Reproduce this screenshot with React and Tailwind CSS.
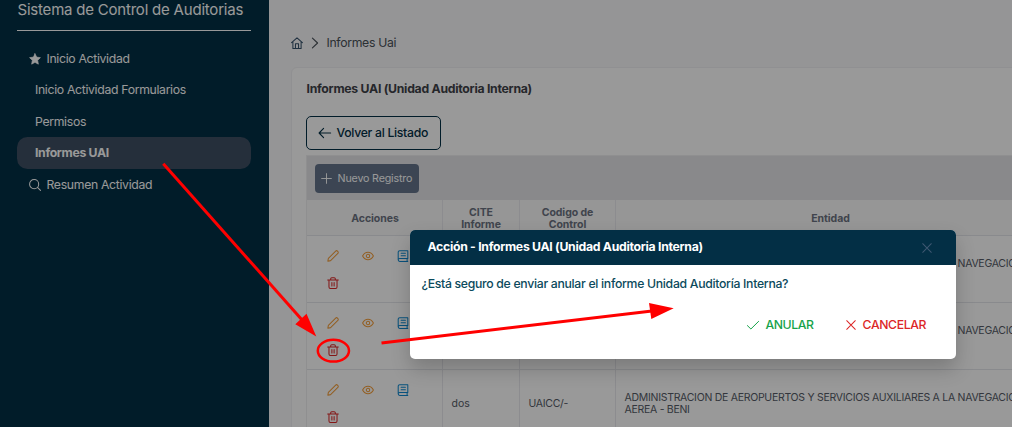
import React from "react";

function Icon({ className, width = 1.1, children }) {
  return (
    <svg
      viewBox="0 0 14 14"
      className={"shrink-0 " + className}
      fill="none"
      stroke="currentColor"
      strokeWidth={width}
      strokeLinecap="round"
      strokeLinejoin="round"
    >
      {children}
    </svg>
  );
}

const Star = () => (
  <Icon className="size-3" width={0.8}>
    <path fill="currentColor" d="M7 .8l1.9 4 4.4.6-3.2 3.1.8 4.5L7 10.9 3.1 13l.8-4.5L.7 5.4l4.4-.6z" />
  </Icon>
);
const Search = () => (
  <Icon className="size-3" width={1.2}>
    <circle cx="6" cy="6" r="5.3" />
    <path d="M9.9 9.9l3.5 3.5" />
  </Icon>
);
const Home = () => (
  <Icon className="size-3" width={1.2}>
    <path d="M.7 6.6L7 1l6.3 5.6M2.2 5.6v7.7h9.6V5.6M5.2 13V7.8h3.6V13" />
  </Icon>
);
const Chevron = () => (
  <Icon className="size-3" width={1.3}>
    <path d="M4 1.2L10 7l-6 5.8" />
  </Icon>
);
const ArrowLeft = () => (
  <Icon className="size-3.5" width={1.1}>
    <path d="M12.6 7H1.2M5.6 2.4L1.1 7l4.5 4.6" />
  </Icon>
);
const Plus = () => (
  <Icon className="size-[11px]" width={1.2}>
    <path d="M7 .8v12.4M.8 7h12.4" />
  </Icon>
);
const Times = ({ className }) => (
  <Icon className={className} width={1.2}>
    <path d="M2 2l10 10M12 2L2 12" />
  </Icon>
);
const Check = () => (
  <Icon className="size-3.5" width={1}>
    <path d="M1.4 7.6l3.5 3.4 7.7-7.6" />
  </Icon>
);
const Pencil = () => (
  <Icon className="size-3 text-[#f59e3a]" width={1.2}>
    <path d="M1 13l.6-3.2 8.5-8.5c.6-.6 1.5-.6 2.1 0l.5.5c.6.6.6 1.5 0 2.1l-8.5 8.5z" />
  </Icon>
);
const Eye = () => (
  <Icon className="size-3 text-[#f59e3a]" width={1.2}>
    <path d="M.7 7C2.2 4.1 4.4 2.6 7 2.6S11.8 4.1 13.3 7C11.8 9.9 9.6 11.4 7 11.4S2.2 9.9.7 7z" />
    <circle cx="7" cy="7" r="2" />
  </Icon>
);
const Book = () => (
  <Icon className="size-3 text-[#0e88d0]" width={1.2}>
    <path d="M12.6 10V.8H3.200C2.200.8 1.400 1.600 1.400 2.600v8.800c0 1 .8 1.900 1.800 1.900h9.400M12.600 10H3.200c-1 0-1.800.6-1.800 1.400M11.800 10v3M4.800 3.900h5M4.800 6.700h5" />
  </Icon>
);
const Trash = () => (
  <Icon className="size-3 text-[#dc2626]" width={1.2}>
    <path d="M.8 3.500h12.400M2.300 3.500v8.200c0 .9.700 1.600 1.600 1.600h6.200c.9 0 1.600-.7 1.600-1.600V3.500M4.300 3.300V2c0-.7.600-1.200 1.300-1.200h2.800c.7 0 1.300.5 1.300 1.200v1.300M5.700 6.400v4M8.300 6.400v4" />
  </Icon>
);

function Sidebar() {
  return (
    <aside className="w-[269px] shrink-0 bg-[#032f45] pr-[18px] pl-[17px] text-white">
      <div className="flex h-[31px] items-start border-b border-white pl-[0.5px] text-[15px] leading-[20px] tracking-[-0.21px] whitespace-nowrap">
        Sistema de Control de Auditorias
      </div>
      <nav className="pt-[12px] text-[12.25px] tracking-[-0.33px]">
        <div className="flex h-[31.5px] items-center gap-[5.5px] pl-3">
          <Star />
          <span className="pt-px">Inicio Actividad</span>
        </div>
        <div className="flex h-[31.5px] items-center pl-[18px]">Inicio Actividad Formularios</div>
        <div className="flex h-[31.5px] items-center pt-px pl-[18px]">Permisos</div>
        <div className="-mt-[0.5px] flex h-[32px] items-center rounded-[10.5px] bg-[#3e4f63] pl-[18px] font-bold">
          Informes UAI
        </div>
        <div className="flex h-[31.5px] items-center gap-[5.5px] pl-3">
          <Search />
          <span className="pt-px">Resumen Actividad</span>
        </div>
      </nav>
    </aside>
  );
}

const rows = [
  { cite: "dos", code: "UAICC/-" },
  { cite: "dos", code: "UAICC/-" },
  { cite: "dos", code: "UAICC/-" },
];

function Row({ cite, code }) {
  return (
    <div className="grid h-[67px] grid-cols-[136px_77px_96px_429px] border-b border-[#e5e7eb] text-[10.5px] leading-3 tracking-[-0.28px] text-[#555b66]">
      <div className="grid grid-cols-[35.2px_35.2px_35.2px] content-start gap-y-[15.2px] border-r border-[#e9eaee] pt-[13.5px] pl-[20px]">
        <Pencil />
        <Eye />
        <Book />
        <Trash />
      </div>
      <div className="flex items-center border-r border-[#e9eaee] pt-px pl-[8.5px] tracking-normal">{cite}</div>
      <div className="flex items-center border-r border-[#e9eaee] pt-px pl-[8.5px]">{code}</div>
      <div className="flex items-center pt-px pr-2 pl-[8.5px]">
        <span className="whitespace-nowrap">
          ADMINISTRACION DE AEROPUERTOS Y SERVICIOS AUXILIARES A LA NAVEGACION
          <br />
          AEREA - BENI
        </span>
      </div>
    </div>
  );
}

function Content() {
  return (
    <main className="min-w-0 flex-1 overflow-hidden bg-[#f8f8fa] pt-[35px] pl-[22px]">
      <div className="flex h-4 items-center gap-[5.5px] text-[12.25px] tracking-[-0.33px] text-[#495057]">
        <span className="flex text-[#34506a]">
          <Home />
        </span>
        <Chevron />
        <span className="pl-[0.5px]">Informes Uai</span>
      </div>
      <section className="mt-4 h-[400px] w-[790px] rounded-md border border-[#f0f0f3] bg-white pt-[13px] pl-3.5">
        <h1 className="h-4 pl-[0.5px] text-[12.25px] leading-4 font-bold tracking-[-0.27px] text-[#3f4249]">
          Informes UAI (Unidad Auditoria Interna)
        </h1>
        <div className="mt-[19px] flex h-[34px] w-[135px] items-center gap-[4.5px] rounded-[5px] border border-[#032f45] pl-[11px] text-[12.25px] font-medium tracking-[-0.3px] whitespace-nowrap text-[#032f45]">
          <ArrowLeft />
          Volver al Listado
        </div>
        <div className="mt-[5px] w-[739px] border border-[#eeeef1]">
          <div className="flex h-11 items-center bg-[#e4e4e8] pl-2">
            <div className="flex h-[29px] w-[104px] items-center gap-[5.5px] rounded-[4px] bg-[#64748b] pl-1.5 text-[10.7px] tracking-[-0.17px] whitespace-nowrap text-white">
              <Plus />
              <span className="pt-0.5">Nuevo Registro</span>
            </div>
          </div>
          <div className="grid h-9 grid-cols-[136px_77px_96px_429px] border-b border-[#e5e7eb] bg-[#fafafa] text-center text-[10.5px] leading-3 font-bold tracking-[-0.05px] text-[#6b7280]">
            <div className="flex items-center justify-center border-r border-[#e9eaee] pt-0.5 pl-px">Acciones</div>
            <div className="flex items-center justify-center border-r border-[#e9eaee] pt-[3px]">
              CITE
              <br />
              Informe
            </div>
            <div className="flex items-center justify-center border-r border-[#e9eaee] px-4 pt-[3px]">
              Codigo de Control
            </div>
            <div className="flex items-center justify-center pt-[3px]">Entidad</div>
          </div>
          {rows.map((row, i) => (
            <Row key={i} {...row} />
          ))}
        </div>
      </section>
    </main>
  );
}

function Dialog() {
  return (
    <div className="absolute top-[230px] left-[410px] flex h-[129px] w-[546px] flex-col overflow-hidden rounded-[5px] bg-white shadow-[0_10px_20px_rgba(0,0,0,0.2)]">
      <div className="flex h-[35px] items-center justify-between bg-[#032f45] pr-[23px] pl-[17.5px] text-[12.25px] font-bold tracking-[-0.29px] text-white">
        Acción - Informes UAI (Unidad Auditoria Interna)
        <Times className="size-3 text-[#3f5872]" />
      </div>
      <p className="mt-[11px] pl-[11.5px] text-[12.25px] leading-4 font-medium tracking-[-0.305px] text-[#0b4a5c]">
        ¿Está seguro de enviar anular el informe Unidad Auditoría Interna?
      </p>
      <div className="mt-[25px] flex h-4 items-center justify-end pr-[30px] text-[12.25px] font-medium tracking-[-0.4px]">
        <span className="flex items-center gap-[5px] text-[#16a34a]">
          <Check />
          ANULAR
        </span>
        <span className="ml-[31px] flex items-center gap-[6px] text-[#dc2626]">
          <Times className="size-3" />
          CANCELAR
        </span>
      </div>
    </div>
  );
}

function Annotations() {
  return (
    <svg className="absolute inset-0 h-[427px] w-[1012px]" viewBox="0 0 1012 427" fill="none">
      <g stroke="#ff0000" strokeWidth="3">
        <path d="M163.3 163.8L303 321" />
        <path d="M381.5 343L652 311" />
        <ellipse cx="333.4" cy="350.7" rx="15.6" ry="10.9" strokeWidth="2.5" />
      </g>
      <path fill="#ff0000" d="M316.3 336.5L306.5 313.8L295.3 324.3zM673.7 308.2L649 303L651.3 319z" />
    </svg>
  );
}

export default function App() {
  return (
    <div className="relative flex h-[427px] w-[1012px] overflow-hidden font-['Inter',sans-serif]">
      <Sidebar />
      <Content />
      <div className="absolute inset-0 bg-black/40" />
      <Dialog />
      <Annotations />
    </div>
  );
}
